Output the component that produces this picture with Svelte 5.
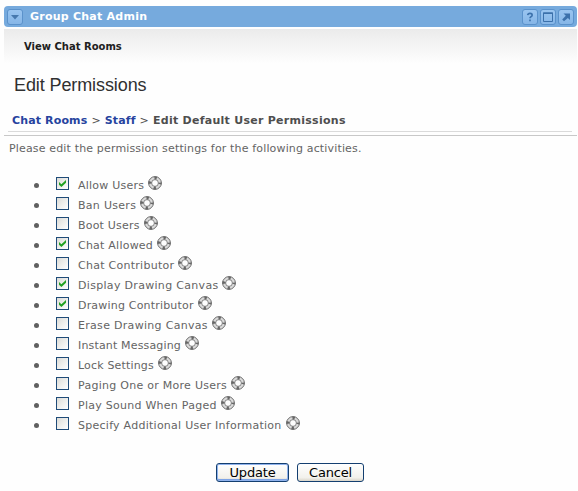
<script>
  const permissions = [
    { label: 'Allow Users', on: true, spacing: 0.22 },
    { label: 'Ban Users', on: false, spacing: 0.29 },
    { label: 'Boot Users', on: false, spacing: 0.2 },
    { label: 'Chat Allowed', on: true, spacing: 0.23 },
    { label: 'Chat Contributor', on: false, spacing: 0.27 },
    { label: 'Display Drawing Canvas', on: true, spacing: 0.31 },
    { label: 'Drawing Contributor', on: true, spacing: 0.19 },
    { label: 'Erase Drawing Canvas', on: false, spacing: 0.3 },
    { label: 'Instant Messaging', on: false, spacing: 0.16 },
    { label: 'Lock Settings', on: false, spacing: 0.17 },
    { label: 'Paging One or More Users', on: false, spacing: 0.27 },
    { label: 'Play Sound When Paged', on: false, spacing: 0.26 },
    { label: 'Specify Additional User Information', on: false, spacing: 0.26 }
  ];
</script>

<div class="portlet">
  <header class="titlebar">
    <span class="tool">
      <svg width="14" height="14" viewBox="0 0 14 14"><path d="M3 5h8L7 9.5z" fill="#4779ae" /></svg>
    </span>
    <h1>Group Chat Admin</h1>
    <span class="tool">
      <svg width="14" height="14" viewBox="0 0 14 14"><path d="M4.7 5.2Q4.9 3.4 7 3.4T9.2 5.1Q9.2 6.2 8 6.7Q7 7.2 7 8.3M7 9.6v1.6" fill="none" stroke="#3c71ab" stroke-width="1.6" /></svg>
    </span>
    <span class="tool">
      <svg width="14" height="14" viewBox="0 0 14 14"><path d="M2.5 3h9v8.5h-9z" fill="none" stroke="#3c71ab" /><path d="M2 2.5h10v1.5H2z" fill="#3c71ab" /></svg>
    </span>
    <span class="tool">
      <svg width="14" height="14" viewBox="0 0 14 14"><path d="M4.5 3.5H11V10L8.9 7.9 5 11.2 3.2 9.4 6.8 5.7z" fill="#3c71ab" /></svg>
    </span>
  </header>
  <nav class="menu"><span>View Chat Rooms</span></nav>
  <h2>Edit Permissions</h2>
  <div class="crumbs"><a>Chat Rooms</a> <i>&gt;</i> <a>Staff</a> <i>&gt;</i> <b>Edit Default User Permissions</b></div>
  <div class="rule"></div>
  <p class="intro">Please edit the permission settings for the following activities.</p>
  <ul>
    {#each permissions as p}
      <li>
        <span class="dot"></span>
        <span class="box">
          {#if p.on}
            <svg width="11" height="11" viewBox="0 0 11 11"><path d="M2 4l2.4 2.3L9 2v2.7L4.4 9 2 6.7z" fill="#21a121" /></svg>
          {/if}
        </span>
        <span class="label" style="letter-spacing: {p.spacing}px">{p.label}</span>
        <svg class="help" width="14" height="14" viewBox="0 0 14 14">
          <circle cx="7" cy="7" r="5" fill="none" stroke="#dadada" stroke-width="3" />
          <circle cx="7" cy="7" r="5" fill="none" stroke="#666" stroke-width="3.2" stroke-dasharray="2.4 5.454" stroke-dashoffset="1.2" />
          <circle cx="7" cy="7" r="6.4" fill="none" stroke="#6c6c6c" stroke-width="1" />
          <circle cx="7" cy="7" r="3.4" fill="none" stroke="#777" stroke-width="0.9" />
        </svg>
      </li>
    {/each}
  </ul>
  <div class="actions">
    <button class="primary"><span>Update</span></button>
    <button><span>Cancel</span></button>
  </div>
</div>

<style>
  :global(body) { background: #fefefe; }
  .portlet {
    box-sizing: border-box;
    width: 578px;
    height: 491px;
    padding: 6px 0 0 4px;
    overflow: hidden;
    font: 11px/14px "DejaVu Sans", Verdana, sans-serif;
    color: #646464;
    white-space: nowrap;
  }
  .titlebar {
    box-sizing: border-box;
    display: flex;
    align-items: center;
    gap: 2px;
    width: 573px;
    height: 21px;
    padding: 0 3px;
    border-radius: 4px;
    background: #76aadd;
  }
  .tool {
    display: flex;
    box-sizing: border-box;
    width: 16px;
    height: 16px;
    border: 1px solid #5b92cb;
    border-radius: 3px;
    background: linear-gradient(#9ac5f0, #86b6e7);
  }
  h1 {
    flex: 1;
    margin: 0 0 0 5px;
    padding-top: 1px;
    font-size: 11px;
    line-height: 20px;
    letter-spacing: 0.24px;
    color: #fff;
  }
  .menu {
    width: 573px;
    height: 35px;
    margin-top: 2px;
    background: linear-gradient(#ebebeb, #fefefe);
  }
  .menu span {
    display: block;
    padding: 11px 0 0 20px;
    font-size: 10px;
    font-weight: bold;
    line-height: 14px;
    color: #202020;
  }
  h2 {
    margin: 10px 0 0 10px;
    font: 18px/22px "Liberation Sans", Arial, sans-serif;
    letter-spacing: -0.1px;
    color: #303030;
  }
  .crumbs {
    height: 14px;
    margin: 18px 0 0 8px;
    font-weight: bold;
    letter-spacing: 0.14px;
    color: #4e4e4e;
  }
  .crumbs a { color: #26439e; }
  .crumbs b { letter-spacing: 0.27px; }
  .crumbs i { font-style: normal; font-weight: normal; }
  .rule {
    width: 568px;
    height: 3px;
    margin: 3px 0 0;
    background: linear-gradient(#dadada, #dadada) 4px 0 / 564px 1px no-repeat;
    padding-top: 1px;
    padding-right: 5px;
    border-bottom: 1px solid #c8c8c8;
  }
  .intro { height: 14px; margin: 6px 0 0 5px; letter-spacing: 0.155px; }
  ul { margin: 19px 0 0; padding: 0; list-style: none; }
  li {
    display: flex;
    height: 20px;
    padding-left: 30px;
  }
  .dot {
    width: 5px;
    height: 5px;
    margin: 8px 17px 0 0;
    border-radius: 50%;
    background: #606060;
  }
  .box {
    box-sizing: border-box;
    width: 13px;
    height: 13px;
    margin: 2px 9px 0 0;
    border: 1px solid #1f4b78;
    background: linear-gradient(135deg, #dcdcd7, #fff);
  }
  .box svg { display: block; }
  .label { padding-top: 1px; line-height: 19px; }
  .help { margin: 1px 0 0 4px; }
  .actions {
    display: flex;
    gap: 8px;
    margin: 28px 0 0 212px;
  }
  button {
    box-sizing: border-box;
    width: 67px;
    height: 19px;
    padding: 0;
    border: 1px solid #143f70;
    border-radius: 3px;
    background: linear-gradient(#fff, #f2f1ec 80%, #d9d4c8);
    font: 13px/16px "DejaVu Sans", Verdana, sans-serif;
    letter-spacing: -0.2px;
    color: #000;
  }
  .primary {
    width: 73px;
    box-shadow: inset 0 0 0 1px #8fb2ec, inset 0 -2px 0 #7ea4e6;
  }
</style>
